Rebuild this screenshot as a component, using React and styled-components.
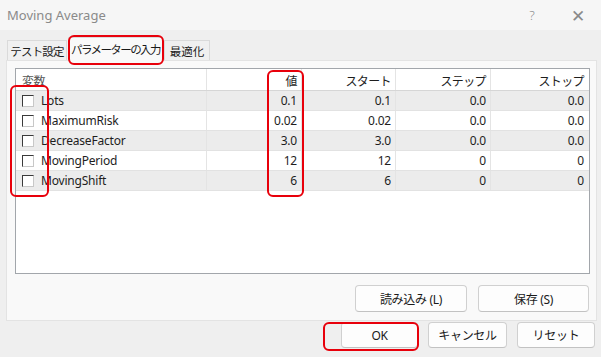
import React from "react";
import styled, { createGlobalStyle } from "styled-components";

const GlobalStyle = createGlobalStyle`
  html, body {
    margin: 0;
    padding: 0;
    background: #efefef;
  }
  body {
    font-family: "Noto Sans", "Noto Sans CJK JP", sans-serif;
  }
`;

const Window = styled.div`
  position: relative;
  width: 601px;
  height: 357px;
  background: #efefef;
  display: flex;
  flex-direction: column;
  overflow: hidden;
  border-bottom-left-radius: 6px;
`;

const TitleBar = styled.div`
  height: 30px;
  background: #f6f6f6;
  display: flex;
  align-items: center;
  padding-left: 7px;
  font-size: 13px;
  color: #8a8a8a;
`;

const Title = styled.div`
  flex: 1;
`;

const TitleButton = styled.div`
  width: 46px;
  text-align: center;
  font-size: ${(p) => p.$size || 13}px;
  color: #8a8a8a;
  font-weight: 300;
`;

const TabStrip = styled.div`
  height: 30px;
  display: flex;
  align-items: flex-end;
  padding-left: 7px;
  gap: 1px;
`;

const Tab = styled.div`
  width: ${(p) => p.$w}px;
  height: ${(p) => (p.$active ? 24 : 20)}px;
  box-sizing: border-box;
  margin-bottom: ${(p) => (p.$active ? -1 : 0)}px;
  display: flex;
  align-items: center;
  justify-content: center;
  font-family: "Noto Sans CJK JP", sans-serif;
  font-size: 11.5px;
  letter-spacing: ${(p) => p.$ls || 0}px;
  color: #1a1a1a;
  white-space: nowrap;
  background: ${(p) => (p.$active ? "#f9f9f9" : "#f0f0f0")};
  border: 1px solid #dadada;
  border-bottom: ${(p) => (p.$active ? "1px solid #f9f9f9" : "none")};
  z-index: ${(p) => (p.$active ? 2 : 1)};
`;

const Panel = styled.div`
  margin: 0 4px 0 6px;
  height: 261px;
  box-sizing: border-box;
  background: #f9f9f9;
  border: 1px solid #e3e3e3;
  padding: 7px 6px 0 8px;
  display: flex;
  flex-direction: column;
`;

const ListBox = styled.div`
  height: 206px;
  box-sizing: border-box;
  border: 1px solid #a2a6ab;
  background: #fff;
`;

const Row = styled.div`
  display: grid;
  grid-template-columns: 191px 95px 94px 95px 1fr;
  height: ${(p) => (p.$header ? 22 : 20)}px;
  background: ${(p) => (p.$shade ? "#ececec" : "#fff")};
  border-bottom: 1px solid ${(p) => (p.$header ? "#d6d6d6" : "#e2e2e2")};
  box-sizing: border-box;
`;

const Cell = styled.div`
  display: flex;
  align-items: center;
  justify-content: ${(p) => (p.$left ? "flex-start" : "flex-end")};
  padding: 0 ${(p) => (p.$left ? 0 : 4)}px 0 ${(p) => (p.$left ? 6 : 0)}px;
  border-right: 1px solid ${(p) => (p.$last ? "transparent" : "#e4e4e4")};
  font-size: 12px;
  letter-spacing: -0.2px;
  color: #1e1e1e;
  white-space: nowrap;
  overflow: hidden;
`;

const HeadCell = styled(Cell)`
  font-family: "Noto Sans CJK JP", sans-serif;
  letter-spacing: -0.6px;
  color: ${(p) => (p.$muted ? "#555" : "#1e1e1e")};
  padding-top: 1px;
`;

const Check = styled.span`
  width: 10px;
  height: 10px;
  border: 1px solid #3a3a3a;
  border-right-color: #c8c8c8;
  border-bottom-color: #c8c8c8;
  background: #fff;
  margin-right: 7px;
  flex-shrink: 0;
`;

const ActionRow = styled.div`
  display: flex;
  justify-content: flex-end;
  gap: 11px;
  padding-top: 11px;
  padding-right: 1px;
`;

const Button = styled.div`
  width: ${(p) => p.$w}px;
  height: ${(p) => p.$h || 26}px;
  box-sizing: border-box;
  border: 1px solid #d0d0d0;
  border-bottom-color: #c2c2c2;
  border-radius: 4px;
  background: #fdfdfd;
  display: flex;
  align-items: center;
  justify-content: center;
  font-family: "Noto Sans", "Noto Sans CJK JP", sans-serif;
  font-size: 12px;
  letter-spacing: -0.3px;
  color: #1a1a1a;
`;

const Footer = styled.div`
  flex: 1;
  display: flex;
  justify-content: flex-end;
  align-items: flex-start;
  gap: 10px;
  padding: 1px 6px 0 0;
`;

const Mark = styled.div`
  position: absolute;
  border: 2px solid #e8000b;
  border-radius: 6px;
  box-sizing: border-box;
  pointer-events: none;
  z-index: 5;
`;

const params = [
  { name: "Lots", value: "0.1", start: "0.1", step: "0.0", stop: "0.0" },
  { name: "MaximumRisk", value: "0.02", start: "0.02", step: "0.0", stop: "0.0" },
  { name: "DecreaseFactor", value: "3.0", start: "3.0", step: "0.0", stop: "0.0" },
  { name: "MovingPeriod", value: "12", start: "12", step: "0", stop: "0" },
  { name: "MovingShift", value: "6", start: "6", step: "0", stop: "0" },
];

export default function App() {
  return (
    <>
      <GlobalStyle />
      <Window>
        <TitleBar>
          <Title>Moving Average</Title>
          <TitleButton $size={13}>?</TitleButton>
          <TitleButton $size={17}>✕</TitleButton>
        </TitleBar>

        <TabStrip>
          <Tab $w={60} $ls={-0.8}>テスト設定</Tab>
          <Tab $w={95} $ls={-1.6} $active>パラメーターの入力</Tab>
          <Tab $w={46}>最適化</Tab>
        </TabStrip>

        <Panel>
          <ListBox>
            <Row $header>
              <HeadCell $left $muted>変数</HeadCell>
              <HeadCell>値</HeadCell>
              <HeadCell>スタート</HeadCell>
              <HeadCell>ステップ</HeadCell>
              <HeadCell $last>ストップ</HeadCell>
            </Row>
            {params.map((p, i) => (
              <Row key={p.name} $shade={i % 2 === 0}>
                <Cell $left>
                  <Check />
                  {p.name}
                </Cell>
                <Cell>{p.value}</Cell>
                <Cell>{p.start}</Cell>
                <Cell>{p.step}</Cell>
                <Cell $last>{p.stop}</Cell>
              </Row>
            ))}
          </ListBox>
          <ActionRow>
            <Button $w={112} $h={27}>読み込み (L)</Button>
            <Button $w={111} $h={27}>保存 (S)</Button>
          </ActionRow>
        </Panel>

        <Footer>
          <Button $w={77}>OK</Button>
          <Button $w={79}>キャンセル</Button>
          <Button $w={78}>リセット</Button>
        </Footer>

        <Mark style={{ left: 68, top: 35, width: 96, height: 30 }} />
        <Mark style={{ left: 10, top: 85, width: 39, height: 112 }} />
        <Mark style={{ left: 267, top: 70, width: 37, height: 127 }} />
        <Mark style={{ left: 323, top: 322, width: 96, height: 29 }} />
      </Window>
    </>
  );
}
